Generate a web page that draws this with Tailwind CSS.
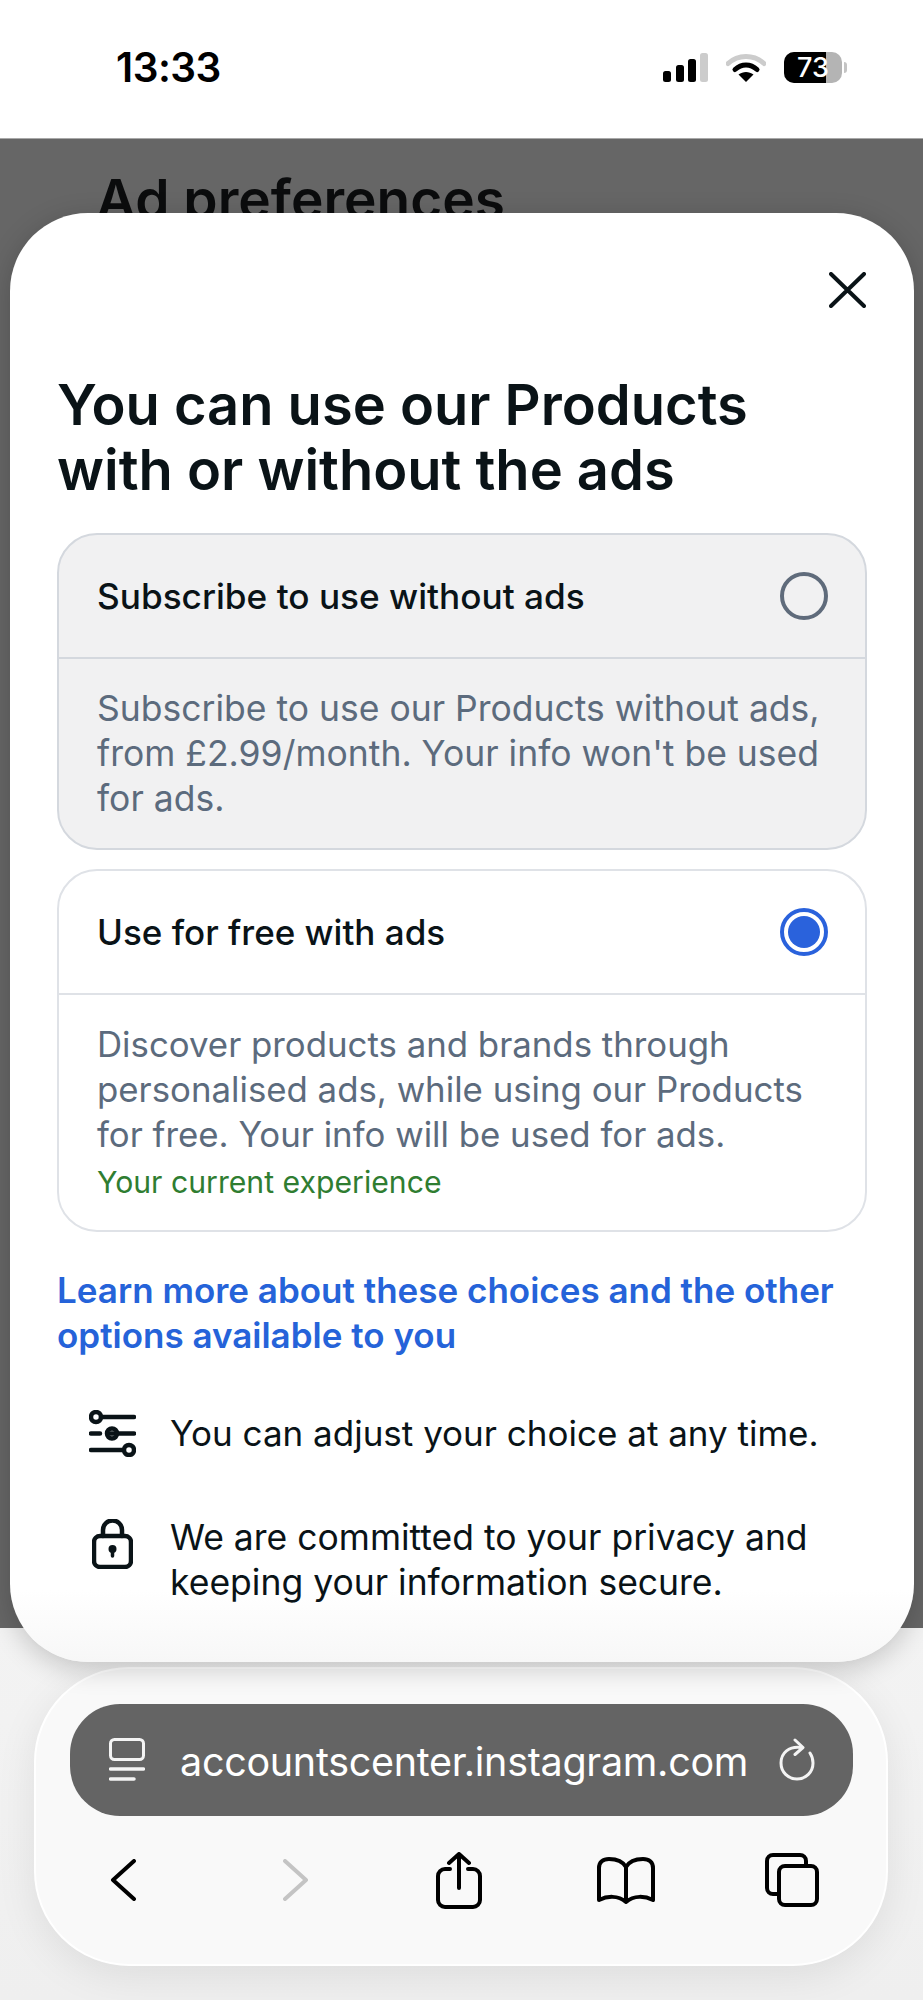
<!DOCTYPE html>
<html lang="en">
<head>
    <meta charset="UTF-8">
    <meta name="viewport" content="width=device-width, initial-scale=1.0">
    <title>Ad preferences</title>
    <script src="https://cdn.jsdelivr.net/npm/@tailwindcss/browser@4"></script>
</head>
<body class="bg-white font-['Inter',sans-serif] text-[#0a1317]">
    <div class="relative w-[923px] h-[2000px] overflow-hidden">
        <!-- status bar -->
        <div class="h-[138px] bg-white flex items-start justify-between pt-[48px] pl-[116px] pr-[76px]">
            <span class="text-[40.500px] leading-[40px] font-semibold text-black tracking-[-0.5px]">13:33</span>
            <div class="flex items-center gap-[18px] h-[38px]">
                <svg width="45" height="29" viewBox="0 0 45 29"><rect x="0" y="18" width="8" height="11" rx="2.5" fill="#000"/><rect x="13" y="12" width="8" height="17" rx="2.5" fill="#000"/><rect x="25" y="6" width="8" height="23" rx="2.5" fill="#000"/><rect x="37" y="0" width="8" height="29" rx="2.5" fill="#ccc"/></svg>
                <svg width="40" height="29" viewBox="0 0 40 29"><path d="M2 10.5C12 1 28 1 38 10.5" fill="none" stroke="#ccc" stroke-width="5" stroke-linecap="round"/><path d="M9 16.5c6.5-6 15.5-6 22 0" fill="none" stroke="#000" stroke-width="5" stroke-linecap="round"/><path d="M20 29l-7.500-7.500c4.500-3.500 10.500-3.500 15 0z" fill="#000"/></svg>
                <div class="flex items-center">
                    <div class="relative w-[58px] h-[31px] rounded-[10px] overflow-hidden bg-[#b4b4b4]">
                        <div class="w-[42px] h-full bg-black"></div>
                        <span class="absolute inset-0 flex items-center justify-center text-white text-[27px] leading-none font-medium">73</span>
                    </div>
                    <div class="w-[3px] h-[11px] ml-[2px] bg-[#c4c4c4] rounded-r-full"></div>
                </div>
            </div>
        </div>

        <!-- page behind the sheet -->
        <div class="h-[1490px] bg-[#666666] overflow-hidden border-t border-[#a8a8a8]">
            <h1 class="ml-[96px] mt-[29px] text-[55px] leading-[62px] font-semibold text-[#0b0c0d]">Ad preferences</h1>
        </div>

        <!-- browser chrome -->
        <div class="h-[372px] bg-gradient-to-b from-[#f3f3f3] to-[#efefef] pt-[39px] pl-[34px]">
            <div class="w-[854px] h-[299px] rounded-[95px] bg-[#f9f9f9] border-2 border-white shadow-[0_10px_40px_rgba(0,0,0,0.08)] pt-[35px] pl-[34px]">
                <div class="w-[783px] h-[112px] rounded-[50px] bg-[#646464] flex items-center text-white pl-[39px] pr-[38px]">
                    <svg width="36" height="45" viewBox="0 0 36 45" fill="none" stroke="#f4f4f4" stroke-linecap="round"><rect x="1.500" y="1.500" width="33" height="20" rx="4" stroke-width="3"/><path d="M1.500 31H34.500M1.500 41H25" stroke-width="3.500"/></svg>
                    <span class="ml-[35px] pt-[5px] text-[39.500px] leading-none tracking-[-0.3px]">accountscenter.instagram.com</span>
                    <svg class="ml-auto" width="36" height="44" viewBox="0 0 36 44" fill="none" stroke="#f4f4f4" stroke-width="3" stroke-linecap="round" stroke-linejoin="round"><path d="M22 9.500C10 8 2 15 2 25c0 9 7 16 16 16s16-7 16-16c0-4-1-7-3-10"/><path d="M16 2l8 7.500-8 7"/></svg>
                </div>
                <div class="flex items-center h-[110px] pt-[18px] pl-[40px]">
                    <svg width="26" height="42" viewBox="0 0 26 42" fill="none" stroke="#000" stroke-width="4" stroke-linecap="round" stroke-linejoin="round"><path d="M24 2L3 21l21 19"/></svg>
                    <svg class="ml-[147px]" width="26" height="42" viewBox="0 0 26 42" fill="none" stroke="#c4c4c4" stroke-width="4" stroke-linecap="round" stroke-linejoin="round"><path d="M2 2l21 19L2 40"/></svg>
                    <svg class="ml-[127px]" width="46" height="57" viewBox="0 0 46 57" fill="none" stroke="#000" stroke-width="4" stroke-linecap="round" stroke-linejoin="round"><path d="M14 17H9a7 7 0 0 0-7 7v24a7 7 0 0 0 7 7h28a7 7 0 0 0 7-7V24a7 7 0 0 0-7-7h-5"/><path d="M23 36V3M13 11l10-9 10 9"/></svg>
                    <svg class="ml-[115px]" width="58" height="47" viewBox="0 0 58 47" fill="none" stroke="#000" stroke-width="4" stroke-linecap="round" stroke-linejoin="round"><path d="M29 10C25 3 18 2 12 2 6 2 2 5 2 11v32c8-4 19-5 27 2 8-7 19-6 27-2V11c0-6-4-9-10-9-6 0-13 1-17 8z"/><path d="M29 10v33"/></svg>
                    <svg class="ml-[110px]" width="54" height="54" viewBox="0 0 54 54" fill="none" stroke="#000" stroke-width="4" stroke-linecap="round" stroke-linejoin="round"><path d="M41 12V8a6 6 0 0 0-6-6H8a6 6 0 0 0-6 6v27a6 6 0 0 0 6 6h4"/><rect x="14" y="13" width="38" height="39" rx="6"/></svg>
                </div>
            </div>
        </div>

        <!-- bottom sheet -->
        <div class="absolute left-[10px] top-[213px] w-[904px] h-[1449px] rounded-[78px] bg-gradient-to-b from-white from-[95%] to-[#f7f7f7] shadow-[0_6px_28px_rgba(0,0,0,0.2)] px-[47px] pt-[59px]">
            <div class="flex justify-end pr-[1px] h-[36px]">
                <svg width="37" height="36" viewBox="0 0 37 36" fill="none" stroke="#0a1317" stroke-width="4" stroke-linecap="round"><path d="M2 2l33 32M35 2L2 34"/></svg>
            </div>
            <h2 class="mt-[65px] text-[56px] leading-[65px] font-semibold">You can use our Products<br>with or without the ads</h2>

            <div class="mt-[30px] w-[810px] h-[317px] rounded-[40px] border-2 border-[#d4d8de] bg-[#f1f1f2]">
                <div class="h-[124px] border-b-2 border-[#d4d8de] flex items-center justify-between pl-[38px] pr-[37px]">
                    <span class="text-[35.200px] font-medium">Subscribe to use without ads</span>
                    <span class="w-[48px] h-[48px] rounded-full border-4 border-[#5f6b7b]"></span>
                </div>
                <p class="pt-[27px] pl-[38px] text-[35.500px] leading-[45px] text-[#5c6b7d]">Subscribe to use our Products without ads,<br>from £2.99/month. Your info won't be used<br>for ads.</p>
            </div>

            <div class="mt-[19px] w-[810px] h-[363px] rounded-[40px] border-2 border-[#dfe2e7] bg-white">
                <div class="h-[124px] border-b-2 border-[#dfe2e7] flex items-center justify-between pl-[38px] pr-[37px]">
                    <span class="text-[35px] font-medium">Use for free with ads</span>
                    <span class="w-[48px] h-[48px] rounded-full border-4 border-[#2a62dc] flex items-center justify-center">
                        <span class="w-[32px] h-[32px] rounded-full bg-[#2a62dc]"></span>
                    </span>
                </div>
                <p class="pt-[27px] pl-[38px] text-[34.800px] leading-[45px] text-[#5c6b7d]">Discover products and brands through<br>personalised ads, while using our Products<br>for free. Your info will be used for ads.</p>
                <p class="mt-[5px] pl-[38px] text-[30.200px] leading-[40px] text-[#2f7d31]">Your current experience</p>
            </div>

            <p class="mt-[36px] text-[35px] leading-[45px] font-semibold text-[#2563d9]">Learn more about these choices and the other<br>options available to you</p>

            <div class="mt-[52px] flex items-center h-[47px]">
                <svg class="ml-[32px] shrink-0" width="47" height="47" viewBox="0 0 47 47" fill="none" stroke="#0a1317" stroke-width="4.500" stroke-linecap="round"><path d="M12 7h33M2 23.500h9M21 23.500h24M2 40h31"/><circle cx="7" cy="7" r="5"/><circle cx="23" cy="23.500" r="5"/><circle cx="40" cy="40" r="5"/></svg>
                <span class="ml-[34px] text-[35px] leading-[45px]">You can adjust your choice at any time.</span>
            </div>

            <div class="mt-[58px] flex items-start">
                <svg class="ml-[35px] mt-[4px] shrink-0" width="41" height="50" viewBox="0 0 41 50" fill="none" stroke="#0a1317" stroke-width="4.500" stroke-linecap="round" stroke-linejoin="round"><rect x="2" y="17" width="37" height="31" rx="6"/><path d="M11 17v-6a9.500 9.500 0 0 1 19 0v6"/><circle cx="20.500" cy="30" r="4" fill="#0a1317" stroke="none"/><path d="M20.500 31v6" stroke-width="3.500"/></svg>
                <span class="ml-[37px] text-[35.500px] leading-[45px]">We are committed to your privacy and<br>keeping your information secure.</span>
            </div>
        </div>
    </div>
</body>
</html>
